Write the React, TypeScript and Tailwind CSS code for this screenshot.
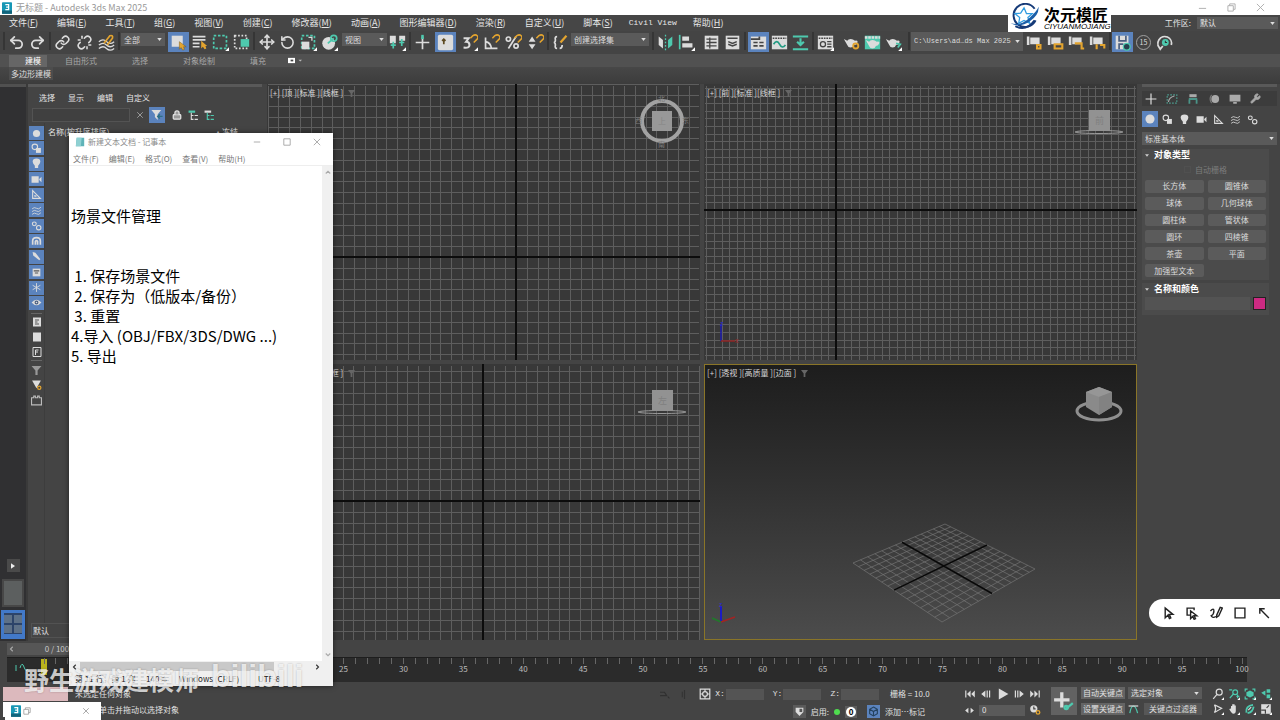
import React, { useState } from 'react';
import { Link, Lock, Move, Redo2, RotateCcw, Undo2, Unlink, Wrench, X } from 'lucide-react';

const TEAL = '#4ec9ae';
const GOLD = '#e3a42f';
const LIGHT = '#dcdcdc';

type IconProps = { children: React.ReactNode; className?: string };

const Icon: React.FC<IconProps> = ({ children, className = 'size-[17px]' }) => (
  <svg viewBox="0 0 20 20" className={`shrink-0 ${className}`} fill="none" stroke={LIGHT} strokeWidth="2">
    {children}
  </svg>
);

// little triangle in the corner of flyout buttons
const Fly = () => <path d="M20 15.500v4.500h-4.500z" fill="#fff" stroke="none" />;
const Magnet = () => <path d="M11 5l3-3q3-2 5 0t0 4l-4 4" stroke={GOLD} strokeWidth="1.800" />;
const Gear = () => <circle cx="15" cy="14" r="3" stroke={GOLD} strokeWidth="2.200" />;
const Teapot = () => (
  <path d="M1 6l4 2q1-2 4-2t5 2q4-1 3 2t-4 3q-1 3-4 3t-4-3z" fill={LIGHT} stroke="none" />
);

const icons = {
  bind: (
    <Icon>
      <path d="M1 9q5-4 9 0t9 0M1 13q5-4 9 0t9 0M1 17q5-4 9 0t9 0" strokeWidth="1.500" />
      <path d="M7 11l7-9q4-1 3 3l-6 8" stroke={GOLD} />
    </Icon>
  ),
  select: (
    <Icon>
      <path d="M2 2h13v13H2z" fill={LIGHT} stroke="none" />
      <path d="M11 9v9l2-2 2 3 2-1-1-3h3z" fill={GOLD} stroke="#6b5014" strokeWidth="0.500" />
    </Icon>
  ),
  byName: (
    <Icon>
      <path d="M2 3h15M2 7h15M2 11h8M2 15h8" />
      <path d="M12 8v9l2-2 2 3 2-1-1-3h2z" fill={GOLD} stroke="none" />
    </Icon>
  ),
  rect: (
    <Icon>
      <path d="M2 2h15v15H2z" stroke={TEAL} strokeDasharray="3 2" />
      <Fly />
    </Icon>
  ),
  crossing: (
    <Icon>
      <path d="M2 2h14v15H2z" strokeDasharray="2 2" />
      <path d="M9 6h10v9H9z" fill={TEAL} stroke="none" />
    </Icon>
  ),
  scale: (
    <Icon>
      <path d="M2 2h15v15H2z" stroke={TEAL} strokeDasharray="3 2" />
      <path d="M2 9h9v9H2z" fill={LIGHT} stroke="none" />
      <path d="M10 4h4v4" strokeWidth="1.500" />
      <Fly />
    </Icon>
  ),
  place: (
    <Icon>
      <circle cx="9" cy="11" r="7.500" fill={LIGHT} stroke="none" />
      <circle cx="15" cy="5" r="3.500" stroke={TEAL} strokeWidth="2" />
      <path d="M8 11l7-6" stroke={TEAL} strokeWidth="2" />
      <Fly />
    </Icon>
  ),
  pivot: (
    <Icon>
      <path d="M1 2h7v9H1zM12 2h7v6h-7z" fill={LIGHT} stroke="none" />
      <path d="M5 9v8M2 13h6M15 6v8M12 10h6" stroke={TEAL} />
      <Fly />
    </Icon>
  ),
  manipulate: (
    <Icon>
      <path d="M10 3v15M2 10h16" />
      <path d="M10 1v5" stroke={TEAL} strokeWidth="3" />
    </Icon>
  ),
  keyboard: (
    <Icon>
      <rect x="1" y="1" width="18" height="18" rx="2" fill={LIGHT} stroke="none" />
      <path d="M8 12V6M6 8l2-2 2 2" stroke="#5d4a22" />
    </Icon>
  ),
  snap: (
    <Icon>
      <path d="M3 5h6l-3 4q4 0 4 4t-7 3" strokeWidth="2.400" />
      <Magnet />
      <Fly />
    </Icon>
  ),
  angle: (
    <Icon>
      <path d="M3 4v13h14M3 9q6 1 7 8" />
      <Magnet />
    </Icon>
  ),
  percent: (
    <Icon>
      <circle cx="4" cy="6" r="2.500" />
      <circle cx="13" cy="14" r="2.500" />
      <path d="M13 3L4 17" />
      <Magnet />
    </Icon>
  ),
  spinner: (
    <Icon>
      <path d="M2 9l4-6 4 6zM2 12h8l-4 6z" fill={LIGHT} stroke="none" />
      <Magnet />
    </Icon>
  ),
  braces: (
    <Icon>
      <path d="M6 3q-3 0-2 4 0 3-2 3 2 0 2 3-1 4 2 4M9 17q3 0 3-4" />
      <path d="M10 10l7-8" stroke={GOLD} strokeWidth="2.600" />
    </Icon>
  ),
  mirror: (
    <Icon>
      <path d="M2 3l5 4v10l-5-4z" fill={LIGHT} stroke="none" />
      <path d="M18 3l-5 4v10l5-4z" fill={TEAL} stroke="none" />
      <path d="M10 1v18" strokeDasharray="2 2" stroke={TEAL} strokeWidth="1.500" />
    </Icon>
  ),
  align: (
    <Icon>
      <path d="M2 1v17" stroke={TEAL} />
      <path d="M5 3h8v5H5zM5 11h12v5H5z" fill={LIGHT} stroke="none" />
      <Fly />
    </Icon>
  ),
  layers: (
    <Icon>
      <path d="M2 2h16v16H2z" fill={LIGHT} stroke="none" />
      <path d="M4 6h12M4 10h12M4 14h12M8 4v13" stroke="#444" strokeWidth="1.500" />
    </Icon>
  ),
  stack: (
    <Icon>
      <path d="M2 2h16v16H2z" fill={LIGHT} stroke="none" />
      <path d="M4 5h12M5 9l5 2 5-2M5 12l5 2 5-2" stroke="#444" strokeWidth="1.800" />
    </Icon>
  ),
  ribbon: (
    <Icon>
      <path d="M1 3h18v15H1z" fill={LIGHT} stroke="none" />
      <path d="M1 6h10V3M4 10h5M11 10h5M4 14h5M11 14h5" stroke="#444" />
    </Icon>
  ),
  curve: (
    <Icon>
      <path d="M1 2h18v16H1z" fill={LIGHT} stroke="none" />
      <path d="M2 5h16" stroke="#444" strokeDasharray="2 1" />
      <path d="M3 12q4-6 7 0t7 1" stroke="#249b83" />
    </Icon>
  ),
  schematic: (
    <Icon>
      <path d="M1 3h18M1 18h18" stroke={TEAL} strokeWidth="2.500" />
      <path d="M10 5v8M6 9l4 4 4-4" stroke={TEAL} strokeWidth="2.500" />
    </Icon>
  ),
  material: (
    <Icon>
      <path d="M1 2h18v16H1z" fill={LIGHT} stroke="none" />
      <path d="M2 5h16" stroke="#444" strokeDasharray="2 1" />
      <circle cx="7" cy="12" r="3" stroke="#444" strokeWidth="1.500" />
      <path d="M12 9h5M12 12h5M12 15h5" stroke="#444" strokeWidth="1.500" />
      <Fly />
    </Icon>
  ),
  renderSetup: (
    <Icon>
      <Teapot />
      <Gear />
    </Icon>
  ),
  frameWindow: (
    <Icon>
      <path d="M1 2h18v16H1z" fill={TEAL} stroke="none" />
      <path d="M1 4h18" stroke={LIGHT} strokeWidth="3" strokeDasharray="3 1" />
      <g transform="translate(1 1)">
        <Teapot />
      </g>
    </Icon>
  ),
  render: (
    <Icon>
      <Teapot />
      <path d="M13 11l5 1-3 4" stroke={TEAL} />
      <Fly />
    </Icon>
  ),
  autosave: (
    <Icon>
      <path d="M2 2h15v16H2z" fill={LIGHT} stroke="none" />
      <path d="M6 2v6h8V2M6 18v-6h5" stroke="#4a5f80" />
      <circle cx="15" cy="15" r="4" fill="#27414f" stroke={TEAL} strokeWidth="1.500" />
    </Icon>
  ),
  history: (
    <Icon>
      <path d="M5 17A8 8 0 1 1 18 13M2 13l3 5 3-4" />
      <circle cx="11" cy="10" r="4" fill={TEAL} stroke="none" />
      <path d="M11 8v2h2" stroke="#333" strokeWidth="1.200" />
    </Icon>
  ),
};

const ProjectIcon: React.FC<{ badge: string }> = ({ badge }) => (
  <Icon>
    <path d="M1 3h3v10H1zM5 4h11v8H5z" fill={LIGHT} stroke="none" />
    <path d={badge} stroke={GOLD} strokeWidth="2.500" />
  </Icon>
);

const Tool: React.FC<{ label: string; active?: boolean; children: React.ReactNode }> = ({ label, active, children }) => (
  <button
    aria-label={label}
    className={`flex h-[20px] w-[21px] shrink-0 items-center justify-center text-[#dcdcdc] ${active ? 'bg-[#5b83bd]' : ''}`}
  >
    {children}
  </button>
);

const Sep = () => <span className="mx-px h-[18px] w-[2px] shrink-0 bg-[#353535]" />;

type PickProps = { label: string; value: string; className?: string };

const Pick: React.FC<PickProps> = ({ label, value, className = '' }) => (
  <div className={`flex shrink-0 items-center bg-[#5a5a5a] px-[3px] ${className}`}>
    <select aria-label={label} className="min-w-0 flex-1 appearance-none bg-transparent outline-none">
      <option>{value}</option>
    </select>
    <svg viewBox="0 0 6 4" className="h-[3px] w-[5px] shrink-0">
      <path d="M0 0h6L3 4z" fill="#ddd" />
    </svg>
  </div>
);

const AppBadge = () => (
  <svg viewBox="0 0 12 14" className="h-[12px] w-[10px] shrink-0">
    <rect width="12" height="14" rx="1" fill="#1797b5" />
    <rect y="10" width="12" height="4" fill="#12647c" />
    <path d="M4 3h4v6H4M5 6h3" stroke="#fff" strokeWidth="1.500" fill="none" />
  </svg>
);

const TitleBar = () => (
  <header className="flex h-[15px] shrink-0 items-center gap-[4px] bg-white pl-[2px] pr-[15px] text-[9px] text-[#999]">
    <AppBadge />
    <h1>无标题 - Autodesk 3ds Max 2025</h1>
    <div className="ml-auto flex gap-[20px]">
      {['M1 6h8', 'M1 3h6v6H1zM3 3V1h6v6H7', 'M1 1l8 8M9 1l-8 8'].map((d, i) => (
        <button key={d} aria-label={['最小化', '还原', '关闭'][i]}>
          <svg viewBox="0 0 10 10" className="size-[9px]" fill="none" stroke="#aaa">
            <path d={d} />
          </svg>
        </button>
      ))}
    </div>
  </header>
);

const menus = [
  ['文件', 'F'], ['编辑', 'E'], ['工具', 'T'], ['组', 'G'], ['视图', 'V'], ['创建', 'C'], ['修改器', 'M'],
  ['动画', 'A'], ['图形编辑器', 'D'], ['渲染', 'R'], ['自定义', 'U'], ['脚本', 'S'], ['Civil View', ''], ['帮助', 'H'],
];

const MenuBar = () => (
  <nav className="flex h-[16px] shrink-0 items-center bg-[#464646] pl-[9px] pr-[2px] text-[9px] text-[#e6e6e6]">
    <div className="flex items-center gap-[19px] leading-[12px]">
      {menus.map(([name, key]) =>
        key ? (
          <button key={name} className="shrink-0">
            {name}(<u>{key}</u>)
          </button>
        ) : (
          <button key={name} className="-mx-[3px] shrink-0 font-['Liberation_Mono',monospace] text-[8px]">{name}</button>
        ),
      )}
    </div>
    <label className="ml-auto flex items-center gap-[6px] text-[8px]">
      工作区:
      <Pick label="工作区" value="默认" className="h-[12px] w-[81px]" />
    </label>
  </nav>
);

const Toolbar = () => (
  <div className="flex h-[23px] shrink-0 items-start bg-[#444] pl-[2px] pt-px text-[8px] text-[#dcdcdc]">
    <Sep />
    <Tool label="撤消"><Undo2 size={17} strokeWidth={2.5} /></Tool>
    <Tool label="重做"><Redo2 size={17} strokeWidth={2.5} /></Tool>
    <Sep />
    <div className="flex gap-px">
      <Tool label="链接"><Link size={15} strokeWidth={2.5} /></Tool>
      <Tool label="取消链接"><Unlink size={15} strokeWidth={2.5} /></Tool>
      <Tool label="绑定">{icons.bind}</Tool>
    </div>
    <Sep />
    <Pick label="选择过滤器" value="全部" className="mr-[3px] mt-px h-[13px] w-[44px]" />
    <Tool label="选择对象" active>{icons.select}</Tool>
    <Tool label="按名称选择">{icons.byName}</Tool>
    <Tool label="矩形选择区域">{icons.rect}</Tool>
    <Tool label="窗口/交叉">{icons.crossing}</Tool>
    <Sep />
    <Tool label="移动"><Move size={16} strokeWidth={2.5} /></Tool>
    <Tool label="旋转"><RotateCcw size={15} strokeWidth={2.5} /></Tool>
    <Tool label="缩放">{icons.scale}</Tool>
    <Tool label="放置">{icons.place}</Tool>
    <Pick label="参考坐标系" value="视图" className="ml-[2px] mt-px h-[13px] w-[45px]" />
    <Tool label="使用轴点中心">{icons.pivot}</Tool>
    <Sep />
    <Tool label="选择并操纵">{icons.manipulate}</Tool>
    <div className="ml-[2px] flex">
      <Tool label="键盘快捷键覆盖" active>{icons.keyboard}</Tool>
    </div>
    <div className="ml-[3px] flex gap-px">
      <Tool label="捕捉开关">{icons.snap}</Tool>
      <Tool label="角度捕捉">{icons.angle}</Tool>
      <Tool label="百分比捕捉">{icons.percent}</Tool>
      <Tool label="微调器捕捉">{icons.spinner}</Tool>
    </div>
    <Sep />
    <Tool label="编辑命名选择集">{icons.braces}</Tool>
    <Pick label="命名选择集" value="创建选择集" className="mr-[2px] mt-px h-[13px] w-[78px]" />
    <Sep />
    <Tool label="镜像">{icons.mirror}</Tool>
    <Tool label="对齐">{icons.align}</Tool>
    <div className="ml-[4px] flex">
      <Tool label="层资源管理器">{icons.layers}</Tool>
      <Tool label="场景资源管理器">{icons.stack}</Tool>
    </div>
    <Sep />
    <div className="ml-px flex">
      <Tool label="功能区" active>{icons.ribbon}</Tool>
      <Tool label="曲线编辑器">{icons.curve}</Tool>
      <Tool label="图解视图">{icons.schematic}</Tool>
    </div>
    <Sep />
    <Tool label="材质编辑器">{icons.material}</Tool>
    <div className="ml-[5px] mr-[3px] flex">
      <Tool label="渲染设置">{icons.renderSetup}</Tool>
      <Tool label="渲染帧窗口">{icons.frameWindow}</Tool>
      <Tool label="渲染">{icons.render}</Tool>
    </div>
    <Sep />
    <Pick
      label="项目路径"
      value="C:\Users\ad…ds Max 2025"
      className="mr-px h-[19px] w-[112px] font-['Liberation_Mono',monospace] text-[7px]"
    />
    <Tool label="项目设置"><ProjectIcon badge="M13 13h4v4h-4z" /></Tool>
    <Tool label="打开项目"><ProjectIcon badge="M9 12h9v5H9z" /></Tool>
    <Tool label="项目结构"><ProjectIcon badge="M8 11h8v6h3" /></Tool>
    <Tool label="项目路径配置"><ProjectIcon badge="M9 12v6M13 13h5v4" /></Tool>
    <Sep />
    <Tool label="自动备份" active>{icons.autosave}</Tool>
    <Tool label="备份间隔">
      <span className="flex size-[15px] items-center justify-center rounded-full border border-[#a0a0a0] text-[7px]">15</span>
    </Tool>
    <Tool label="备份历史">{icons.history}</Tool>
  </div>
);

const Ribbon = () => (
  <>
    <div className="flex h-[13px] shrink-0 items-center gap-[35px] bg-[#515151] pl-[9px] text-[8px] text-[#a8a8a8]">
      <button className="h-[12px] w-[38px] bg-[#666] pl-[10px] leading-[12px] text-white">建模</button>
      <button className="-ml-[17px]">自由形式</button>
      <button>选择</button>
      <button>对象绘制</button>
      <button>填充</button>
      <button aria-label="最小化功能区" className="-ml-[14px]">
        <svg viewBox="0 0 16 8" className="h-[7px] w-[16px]">
          <path d="M0 1h8v6H0z" fill="#fff" />
          <path d="M3 3h3v2H3z" fill="#444" />
          <path d="M12 3h4l-2 2z" fill="#bbb" />
        </svg>
      </button>
    </div>
    <div className="flex h-[17px] shrink-0 items-start bg-gradient-to-b from-[#474747] to-[#3c3c3c] pl-[9px] text-[8px] text-[#ddd]">
      <button className="h-[13px] bg-[#4d4d4d] px-[2px]">多边形建模</button>
    </div>
  </>
);

const LayoutStrip = () => (
  <aside className="flex w-[26px] shrink-0 flex-col items-center bg-[#303032] pb-[2px]">
    <span className="h-[3px] w-full bg-[#505050]" />
    <button aria-label="展开" className="mt-auto flex h-[13px] w-[13px] items-center justify-center bg-[#4a4a4a]">
      <svg viewBox="0 0 6 8" className="h-[6px] w-[4px]"><path d="M0 0l6 4-6 4z" fill="#eee" /></svg>
    </button>
    <button aria-label="单视口" className="mt-[7px] h-[28px] w-[22px] border-2 border-[#474747] bg-[#5c5f5f]" />
    <button
      aria-label="四视口"
      className="mt-[3px] grid h-[29px] w-[24px] grid-cols-2 content-center gap-[2px] border-[3px] border-b-[5px] border-[#4279c8] bg-[#2d4469]"
    >
      {[0, 1, 2, 3].map((n) => <span key={n} className="h-[8px] bg-[#5e7187]" />)}
    </button>
  </aside>
);

const filters: [string, React.ReactNode][] = [
  ['几何体', <circle key="a" cx="10" cy="10" r="6.500" fill={LIGHT} stroke="none" />],
  ['图形', <g key="a"><circle cx="7" cy="7" r="5" /><path d="M9 9h9v9H9z" fill={LIGHT} stroke="none" /></g>],
  ['灯光', <path key="a" d="M10 1q7 0 7 6 0 3-4 7v4H7v-4Q3 10 3 7q0-6 7-6z" fill={LIGHT} stroke="none" />],
  ['摄影机', <path key="a" d="M1 4h13v12H1zM15 9l4-4v10l-4-4z" fill={LIGHT} stroke="none" />],
  ['辅助对象', <path key="a" d="M3 3v14h14zM7 11v2h3" />],
  ['空间扭曲', <path key="a" d="M2 7q4-4 8-1t8-2M2 12q4-4 8-1t8-2M2 17q4-4 8-1t8-2" strokeWidth="1.500" />],
  ['组', <g key="a" strokeWidth="2"><circle cx="6" cy="7" r="3.500" /><circle cx="14" cy="14" r="4" /></g>],
  ['外部参照', <path key="a" d="M3 16V9q0-6 7-6t7 6v7M8 16v-6q2-3 4 0v6" strokeWidth="3" />],
  ['骨骼', <path key="a" d="M3 2l5 1 9 12-2 2L4 8z" fill={LIGHT} stroke="none" />],
  ['容器', <g key="a"><path d="M3 3h14v14H3z" fill={LIGHT} stroke="none" /><path d="M5 7h10M7 11h6" stroke="#555" /></g>],
  ['冻结', <path key="a" d="M10 2v16M3 6l14 8M17 6L3 14" strokeWidth="1.600" />],
  ['隐藏', <g key="a"><path d="M1 10q9-10 18 0-9 10-18 0z" fill={LIGHT} stroke="none" /><circle cx="10" cy="10" r="2.500" stroke="#4a5f80" /></g>],
];

const Explorer = () => (
  <section className="flex w-[240px] shrink-0 flex-col border-l-2 border-[#3a3a3a] bg-[#444] text-[8px] text-[#e4e4e4]">
    <span className="mr-[4px] h-[3px] bg-[#595959]" />
    <div className="mt-[4px] flex h-[14px] items-center gap-[13px] pl-[11px]">
      {['选择', '显示', '编辑', '自定义'].map((m) => <button key={m}>{m}</button>)}
    </div>
    <div className="mt-[2px] flex h-[16px] items-center pl-[4px]">
      <input aria-label="查找" className="h-[14px] w-[98px] border border-[#535353] bg-[#404040] px-1" />
      <button aria-label="清除" className="ml-[5px]"><X size={10} color="#aaa" /></button>
      <button aria-label="过滤" className="ml-[4px] flex size-[16px] items-center justify-center bg-[#5b83bd]">
        <Icon className="size-[14px]">
          <path d="M2 3h14l-5 6v8l-4-4V9z" fill={LIGHT} stroke="none" />
          <path d="M12 12h6M14 9l-3 3 3 3" stroke="#2d6f86" />
        </Icon>
      </button>
      <button aria-label="锁定" className="ml-[7px]"><Lock size={10} strokeWidth={3} fill="#999" /></button>
      <button aria-label="展开全部" className="ml-[6px]">
        <Icon className="size-[11px]"><path d="M1 3h12" stroke={TEAL} strokeWidth="4" /><path d="M6 5v12h4M6 10h4M12 10h6M12 17h6" /></Icon>
      </button>
      <button aria-label="折叠全部" className="ml-[5px]">
        <Icon className="size-[11px]"><path d="M1 3h12" strokeWidth="4" /><path d="M6 5v12h4M6 10h4M12 10h6M12 17h6" stroke={TEAL} /></Icon>
      </button>
    </div>
    <div className="flex flex-1 pl-px">
      <div className="mt-[3px] flex w-[15px] flex-col items-center">
        <div className="flex h-[184px] flex-col justify-between">
          {filters.map(([label, art]) => (
            <button key={label} aria-label={label} className="flex h-[14px] w-[15px] items-center justify-center bg-[#5b83bd]">
              <Icon className="size-[11px]">{art}</Icon>
            </button>
          ))}
        </div>
        <span className="mt-[3px] h-px w-[11px] bg-[#666]" />
        <div className="mt-[3px] flex flex-col gap-[5px]">
          <button aria-label="全选"><Icon className="size-[10px]"><path d="M2 1h16v18H2z" fill={LIGHT} stroke="none" /><path d="M6 6h8M6 10h5M6 14h8" stroke="#555" /></Icon></button>
          <button aria-label="取消选择"><Icon className="size-[10px]"><path d="M2 1h16v18H2z" fill={LIGHT} stroke="none" /></Icon></button>
          <button aria-label="反选"><Icon className="size-[10px]"><path d="M2 1h16v18H2zM7 16V6h6M7 10h5" /></Icon></button>
        </div>
        <span className="mt-[3px] h-px w-[11px] bg-[#666]" />
        <div className="mt-[4px] flex flex-col gap-[4px]">
          <button aria-label="过滤器"><Icon className="size-[11px]"><path d="M1 2h18l-7 8v8H8v-8z" fill="#999" stroke="none" /></Icon></button>
          <button aria-label="高级过滤器"><Icon className="size-[11px]"><path d="M2 1h16l-8 14z" fill={LIGHT} stroke="none" /><Gear /></Icon></button>
          <button aria-label="收藏"><Icon className="size-[11px]"><path d="M1 5h4V2h3v3h4V2h3v3h4v13H1z" stroke="#bbb" /></Icon></button>
        </div>
      </div>
      <div className="flex flex-1 flex-col border-l border-[#3d3d3d]">
        <div className="flex h-[18px] items-center pl-[3px]">
          <span>名称(按升序排序)</span>
          <span className="ml-auto pr-[28px]">▴ 冻结</span>
        </div>
      </div>
    </div>
    <div className="mb-[3px] ml-[3px] flex h-[15px] items-center border border-[#525252] pl-px">
      <button>默认</button>
    </div>
  </section>
);

type Pt = [number, number];

const Grid: React.FC<{ axis: Pt; step: number }> = ({ axis: [ax, ay], step }) => {
  const marks = (origin: number, end: number) => {
    const out: number[] = [];
    for (let v = origin % step; v < end; v += step) out.push(Math.round(v));
    return out;
  };
  return (
    <g shapeRendering="crispEdges">
      <path
        d={marks(ax, 433).map((x) => `M${x} 1V276`).join('') + marks(ay, 276).map((y) => `M0 ${y}H431`).join('')}
        stroke="#5e5e5e"
        transform="translate(0.500 0.500)"
      />
      <path d={`M${ax} 0V276M0 ${ay}H433`} stroke="#0c0c0c" strokeWidth="2" />
    </g>
  );
};

// maps the unit square onto the four projected floor corners
const project = (u: number, v: number): Pt => {
  const [p0, p1, p2, p3]: Pt[] = [[241, 160], [331, 205], [238, 258], [149, 199]];
  const dx1 = p1[0] - p2[0], dx2 = p3[0] - p2[0], sx = p0[0] - p1[0] + p2[0] - p3[0];
  const dy1 = p1[1] - p2[1], dy2 = p3[1] - p2[1], sy = p0[1] - p1[1] + p2[1] - p3[1];
  const det = dx1 * dy2 - dx2 * dy1;
  const g = (sx * dy2 - dx2 * sy) / det;
  const h = (dx1 * sy - sx * dy1) / det;
  const w = g * u + h * v + 1;
  return [
    ((p1[0] - p0[0] + g * p1[0]) * u + (p3[0] - p0[0] + h * p3[0]) * v + p0[0]) / w,
    ((p1[1] - p0[1] + g * p1[1]) * u + (p3[1] - p0[1] + h * p3[1]) * v + p0[1]) / w,
  ];
};

const seg = (a: Pt, b: Pt) => `M${a[0]} ${a[1]}L${b[0]} ${b[1]}`;

const Floor = () => {
  const lines = Array.from({ length: 15 }, (_, i) => i / 14);
  return (
    <g>
      <path d={lines.map((t) => seg(project(t, 0), project(t, 1)) + seg(project(0, t), project(1, t))).join('')} stroke="#747474" strokeWidth="0.700" />
      <path d={seg(project(0.5, 0), project(0.5, 1)) + seg(project(0, 0.5), project(1, 0.5))} stroke="#080808" strokeWidth="1.500" />
    </g>
  );
};

const SideCube: React.FC<{ x: number; y: number; face: string }> = ({ x, y, face }) => (
  <g transform={`translate(${x} ${y})`}>
    <ellipse cx="0" cy="12" rx="24" ry="1.500" fill="none" stroke="#9a9a9a" />
    <rect x="-10" y="-10" width="21" height="21" fill="#929292" />
    <text x="-4" y="4" fontSize="9" fill="#808080">{face}</text>
  </g>
);

const Viewport: React.FC<{ view: string; shading: string; style: string; active?: boolean; children: React.ReactNode }> = ({
  view, shading, style, active, children,
}) => (
  <div
    className={`relative min-h-0 min-w-0 overflow-hidden ${active ? 'bg-gradient-to-b from-[#1d1d1d] to-[#4c4c4c]' : 'bg-[#383838]'}`}
  >
    <svg viewBox="0 0 433 276" preserveAspectRatio="xMidYMid slice" className="block size-full" fill="none">
      {children}
    </svg>
    <div className={`absolute inset-0 flex items-start gap-[5px] border pl-[2px] pt-[2px] text-[8px] leading-[12px] text-[#d8d8d8] ${active ? 'border-[#8a7528]' : 'border-transparent'}`}>
      <span className="whitespace-pre">[+] [{view} ][{shading} ][{style} ]</span>
      <svg viewBox="0 0 8 8" className="mt-[3px] size-[7px]"><path d="M0 0h8L5 4v4H3V4z" fill="#666" /></svg>
    </div>
  </div>
);

const Viewports = () => (
  <main className="grid min-w-0 flex-1 grid-cols-2 grid-rows-2 gap-[4px] bg-[#444] pb-px pl-px">
    <Viewport view="顶" shading="标准" style="线框">
      <Grid axis={[249, 173]} step={10.8} />
      <circle cx="395" cy="37" r="20" stroke="#a2a2a2" strokeWidth="4" />
      <rect x="385" y="27" width="20" height="20" fill="#989898" />
      <text x="391" y="40" fontSize="8" fill="#868686">上</text>
      <text x="391" y="17" fontSize="7" fill="#7c7c7c">北</text>
      <text x="391" y="63" fontSize="7" fill="#7c7c7c">南</text>
      <text x="368" y="39" fontSize="7" fill="#7c7c7c">西</text>
      <text x="415" y="39" fontSize="7" fill="#7c7c7c">东</text>
    </Viewport>
    <Viewport view="前" shading="标准" style="线框">
      <Grid axis={[132, 126]} step={7.63} />
      <SideCube x={395} y={36} face="前" />
      <path d="M17 257V240" stroke="#1b1bb0" strokeWidth="1.500" />
      <path d="M17 257H31" stroke="#8f2323" strokeWidth="1.500" />
      <text x="16" y="242" fontSize="7" fill="#2a2ad0">z</text>
      <text x="31" y="259" fontSize="7" fill="#a32323">x</text>
    </Viewport>
    <Viewport view="左" shading="标准" style="线框">
      <Grid axis={[216, 137]} step={10.8} />
      <SideCube x={395} y={36} face="左" />
    </Viewport>
    <Viewport view="透视" shading="高质量" style="边面" active>
      <Floor />
      <ellipse cx="395" cy="47" rx="22" ry="9" stroke="#8f8f8f" strokeWidth="3" />
      <path d="M395 23l13 5v15l-13 8-13-8V28z" fill="#8a8a8a" />
      <path d="M395 23l13 5-13 5-13-5z" fill="#969696" />
      <path d="M395 33v18l13-8V28z" fill="#828282" />
      <path d="M17 258V242" stroke="#1b1bc4" strokeWidth="2" />
      <path d="M17 258l14-5" stroke="#a32323" strokeWidth="1.500" />
      <path d="M17 258l-9-4" stroke="#1f7a2a" strokeWidth="1.500" />
      <text x="15" y="243" fontSize="7" fill="#2a2ad0">z</text>
    </Viewport>
  </main>
);

const panelTabs: [string, React.ReactNode][] = [
  ['创建', <path key="a" d="M10 1v18M1 10h18" />],
  ['修改', <g key="a" stroke="#4a9488"><path d="M2 3h16v14H2z" strokeDasharray="3 2" /><path d="M4 15q1-8 10-10" stroke="#aaa" /></g>],
  ['层次', <g key="a"><path d="M4 2h12v5H4z" fill="#aaa" stroke="none" /><path d="M4 11v7M16 11v7M3 10h14" stroke="#4a9488" strokeWidth="3" /></g>],
  ['运动', <g key="a"><circle cx="12" cy="10" r="6.500" fill="#aaa" stroke="none" /><path d="M6 3q-5 7 0 14" stroke="#777" /></g>],
  ['显示', <path key="a" d="M1 3h18v11H1zM7 15h6v3H7z" fill="#aaa" stroke="none" />],
];

const primitives = ['长方体', '圆锥体', '球体', '几何球体', '圆柱体', '管状体', '圆环', '四棱锥', '茶壶', '平面', '加强型文本'];

const Rollout: React.FC<{ title: string; children: React.ReactNode }> = ({ title, children }) => (
  <section className="mr-[8px] bg-[#4b4b4b] px-[3px] pb-[3px]">
    <h2 className="flex h-[12px] items-center gap-[5px] text-[9px] font-bold text-white">
      <svg viewBox="0 0 6 4" className="h-[3px] w-[4px]"><path d="M0 0h6L3 4z" fill="#ccc" /></svg>
      {title}
    </h2>
    {children}
  </section>
);

const CommandPanel = () => (
  <aside className="flex w-[143px] shrink-0 flex-col bg-[#444] pl-[5px] pr-[3px] text-[8px] text-[#dcdcdc]">
    <span className="h-[3px] bg-[#595959]" />
    <div className="mt-[4px] flex h-[15px] items-center gap-[9px] bg-[#3c3c3c] pl-[3px]">
      {panelTabs.map(([label, art]) => (
        <button key={label} aria-label={label}><Icon className="size-[12px]">{art}</Icon></button>
      ))}
      <button aria-label="实用程序"><Wrench size={11} color="#aaa" fill="#aaa" /></button>
    </div>
    <div className="mt-[5px] flex h-[16px] items-center gap-px">
      {filters.slice(0, 7).map(([label, art], i) => (
        <button key={label} aria-label={label} className={`flex size-[16px] items-center justify-center ${i === 0 ? 'bg-[#5b83bd]' : ''}`}>
          <Icon className={i === 0 ? 'size-[14px]' : 'size-[11px]'}>{art}</Icon>
        </button>
      ))}
    </div>
    <Pick label="类别" value="标准基本体" className="mt-[5px] h-[13px]" />
    <div className="mt-[4px] flex flex-col gap-[3px]">
      <Rollout title="对象类型">
        <label className="flex h-[17px] items-center justify-center gap-[4px] text-[#7c7c7c]">
          <input type="checkbox" disabled className="size-[7px] appearance-none border border-[#505050]" />
          自动栅格
        </label>
        <div className="mt-[2px] grid h-[97px] grid-cols-2 gap-[4px]">
          {primitives.map((p) => (
            <button key={p} className="min-h-0 rounded-xs bg-[#5b5b5b] leading-[12px]">{p}</button>
          ))}
        </div>
      </Rollout>
      <Rollout title="名称和颜色">
        <div className="flex h-[17px] items-center gap-[3px]">
          <input aria-label="名称" className="h-[13px] min-w-0 flex-1 bg-[#535353] px-1" />
          <button aria-label="颜色" className="size-[13px] border border-[#222] bg-[#cc2a82]" />
        </div>
      </Rollout>
    </div>
  </aside>
);

const TimeSlider = () => (
  <div className="flex h-[16px] shrink-0 items-center bg-[#444] pl-[7px] text-[8px] text-[#ccc]">
    <button aria-label="上一帧" className="flex h-[12px] w-[10px] items-center justify-center bg-[#555]">
      <Chevron d="M5 1L2 4l3 3" />
    </button>
    <button className="h-[12px] w-[80px] bg-[#565656] leading-[12px]">0 / 100</button>
  </div>
);

const Ruler = () => (
  <div className="flex h-[25px] shrink-0 bg-[#444] pl-[7px] pr-[33px]">
    <div className="flex flex-1 border-t border-[#1e1e1e] bg-[#2b2b2b] pl-[37px] pr-[5px]">
      <svg className="h-full w-full overflow-visible">
        <rect x="-3" y="1" width="6" height="16" fill="#b9b21c" />
        <path d="M-28 7v6M-24 10q2-7 4-1t4 2" stroke={TEAL} fill="none" />
        {Array.from({ length: 101 }, (_, f) => (
          <line key={f} x1={`${f}%`} x2={`${f}%`} y1="0" y2="6" stroke="#666" shapeRendering="crispEdges" />
        ))}
        {/* frame 0 is under the yellow marker, so it gets no number */}
        {Array.from({ length: 20 }, (_, i) => (
          <text key={i} x={`${(i + 1) * 5}%`} y="14" fontSize="8" fill="#bbb" textAnchor="middle">{(i + 1) * 5}</text>
        ))}
      </svg>
    </div>
  </div>
);

const playback: [string, string][] = [
  ['转至开头', 'M2 4h2v12H2zM11 4v12L5 10zM18 4v12l-6-6z'],
  ['上一帧', 'M9 4v12L2 10zM11 4h2v12h-2zM15 4h2v12h-2z'],
  ['播放', 'M3 1l16 9-16 9z'],
  ['下一帧', 'M3 4h2v12H3zM7 4h2v12H7zM11 4l7 6-7 6z'],
  ['转至结尾', 'M2 4l6 6-6 6zM9 4l6 6-6 6zM16 4h2v12h-2z'],
];

const navIcons: [string, React.ReactNode][] = [
  ['缩放', <g key="a"><circle cx="12" cy="7" r="5" /><path d="M8 11l-6 7" /></g>],
  ['缩放所有', <g key="a" stroke={TEAL}><circle cx="12" cy="7" r="4" /><path d="M9 10l-6 7M2 3h5M14 14h5M16 11v6" /></g>],
  ['最大化显示', <g key="a"><path d="M2 6V2h4M14 2h4v4M18 14v4h-4M6 18H2v-4" stroke={TEAL} /><path d="M10 4l6 3v6l-6 3-6-3V7z" fill={TEAL} stroke="none" /></g>],
  ['所有最大化显示', <g key="a" fill={TEAL} stroke="none"><path d="M2 8l7-4v9zM11 2h6v6h-6zM11 11h6v6h-6z" /></g>],
  ['视野', <path key="a" d="M4 3l12 6L4 16M4 3q4 6 0 13" />],
  ['平移', <path key="a" d="M5 9V5h2v4V2h2v7V2h2v7V4h2v9q0 5-4 5-3 0-7-8z" fill={LIGHT} stroke="none" />],
  ['环绕', <g key="a"><path d="M4 16Q2 5 15 3M6 17q9-2 10-11" stroke={TEAL} strokeWidth="3" /><path d="M7 12l5-5" /></g>],
  ['最大化视口', <g key="a"><path d="M2 2h16v16H2z" fill={LIGHT} stroke="none" /><path d="M2 12h7v6M11 8l4-4" stroke="#444" /></g>],
];

const CoordField: React.FC<{ axis: string }> = ({ axis }) => (
  <label className="flex items-center gap-px font-['Liberation_Mono',monospace]">
    {axis}:
    <input className="h-[11px] w-[38px] bg-[#545454] px-1" />
  </label>
);

const StatusBar = () => {
  const [frame, setFrame] = useState('0');
  return (
    <footer className="flex h-[38px] shrink-0 items-start bg-[#444] pl-[3px] pr-[7px] pt-[5px] text-[8px] text-[#e0e0e0]">
      <div className="flex w-[65px] flex-col gap-px">
        <span className="h-[14px] bg-[#dcb9bd]" />
        <span className="h-[15px] bg-white" />
      </div>
      <div className="ml-[7px] flex flex-col gap-[4px] leading-[12px]">
        <p className="h-[13px] pt-px">未选定任何对象</p>
        <p>单击或单击并拖动以选择对象</p>
      </div>
      <div className="ml-auto flex flex-col gap-[4px]">
        <div className="flex h-[14px] items-center gap-[9px]">
          <Icon className="size-[11px]"><path d="M2 6h8l4 6H2M16 14l3 3" stroke="#303030" /></Icon>
          <Icon className="size-[11px]"><path d="M10 2v16M6 5v10" stroke="#333" /></Icon>
          <div className="flex items-center gap-[4px]">
            <Icon className="size-[12px]"><path d="M2 2h16v16H2z" /><circle cx="10" cy="10" r="4" /><path d="M10 2v4M10 14v4M2 10h4M14 10h4" /></Icon>
            <CoordField axis="X" />
          </div>
          <CoordField axis="Y" />
          <CoordField axis="Z" />
          <span className="ml-[2px] w-[74px]">栅格 = 10.0</span>
        </div>
        <div className="flex h-[13px] items-center gap-[5px] self-end pr-[39px]">
          <button aria-label="自适应降级" className="bg-[#5a5a5a] p-px">
            <Icon className="size-[11px]"><path d="M3 3h14v8l-7 7-7-7z" fill={LIGHT} stroke="none" /><path d="M10 5h5v6h-5z" fill="#555" stroke="none" /></Icon>
          </button>
          <span>启用:</span>
          <span className="size-[6px] rounded-full bg-[#4fdc4f]" />
          <button className="flex h-[12px] w-[12px] items-center justify-center bg-[#5c5c5c]">
            <span className="flex size-[10px] items-center justify-center rounded-full bg-white text-[8px] font-bold text-black">0</span>
          </button>
          <button aria-label="隔离" className="ml-[5px] bg-[#5b83bd] p-px">
            <Icon className="size-[11px]"><path d="M10 2l7 4v8l-7 4-7-4V6zM3 6l7 4 7-4M10 10v8" stroke="#24425f" /></Icon>
          </button>
          <button>添加…标记</button>
        </div>
      </div>
      <div className="flex w-[77px] flex-col gap-[3px]">
        <div className="flex h-[14px] items-center justify-between">
          {playback.map(([label, d]) => (
            <button key={label} aria-label={label}>
              <Icon className="size-[12px]"><path d={d} fill={LIGHT} stroke="none" /></Icon>
            </button>
          ))}
        </div>
        <div className="flex h-[12px] items-center justify-between">
          <button aria-label="关键点模式"><Icon className="size-[11px]"><path d="M8 5v10l-6-5zM12 5v10l6-5z" fill={LIGHT} stroke="none" /></Icon></button>
          <input
            aria-label="当前帧"
            value={frame}
            onChange={(e) => setFrame(e.target.value)}
            className="h-[11px] w-[46px] bg-[#5a5a5a] px-[3px]"
          />
          <button aria-label="时间配置"><Icon className="size-[12px]"><circle cx="8" cy="8" r="6" fill={LIGHT} stroke="none" /><path d="M8 4v4h3" stroke="#444" /><Gear /></Icon></button>
        </div>
      </div>
      <button aria-label="设置关键点" className="ml-[10px] flex h-[28px] w-[26px] items-center justify-center bg-[#626262]">
        <Icon className="size-[22px]"><path d="M8 2v14M1 9h14" strokeWidth="3" /><path d="M12 17l6-5" stroke={TEAL} /><circle cx="12" cy="16" r="1.500" stroke={TEAL} /></Icon>
      </button>
      <div className="ml-[4px] flex w-[44px] flex-col gap-[4px]">
        <button className="h-[12px] bg-[#646464] leading-[12px]">自动关键点</button>
        <button className="h-[12px] bg-[#646464] leading-[12px]">设置关键点</button>
      </div>
      <div className="ml-[3px] flex w-[74px] flex-col gap-[4px]">
        <Pick label="选择集" value="选定对象" className="h-[12px]" />
        <div className="flex h-[12px] gap-[4px]">
          <Icon className="size-[12px]"><path d="M3 17q2-12 6-12t7 12" stroke={TEAL} /><path d="M1 5h16" /></Icon>
          <button className="flex-1 bg-[#575757] leading-[12px]">关键点过滤器</button>
        </div>
      </div>
      <div className="ml-[9px] grid grid-cols-4 gap-x-[2px] gap-y-px">
        {navIcons.map(([label, art]) => (
          <button key={label} aria-label={label} className="flex size-[14px] items-center justify-center">
            <Icon className="size-[12px]">{art}<Fly /></Icon>
          </button>
        ))}
      </div>
    </footer>
  );
};

const NOTE = `

场景文件管理


 1. 保存场景文件
 2. 保存为（低版本/备份）
 3. 重置
4.导入 (OBJ/FBX/3DS/DWG ...)
5. 导出`;

const Chevron: React.FC<{ d: string; color?: string }> = ({ d, color = '#aaa' }) => (
  <svg viewBox="0 0 8 8" className="size-[6px]" fill="none" stroke={color} strokeWidth="1.500"><path d={d} /></svg>
);

const Notepad = () => {
  const [text, setText] = useState(NOTE);
  return (
    <section className="absolute left-[69px] top-[133px] flex h-[553px] w-[264px] flex-col bg-white text-[8px] text-[#777] shadow-[0_0_5px_#0008]">
      <header className="flex h-[18px] shrink-0 items-center gap-[3px] pl-[6px] pr-[12px] text-[#8c8c8c]">
        <svg viewBox="0 0 12 12" className="size-[10px]">
          <path d="M2 1h9v10H1z" fill="#5eb3b8" />
          <path d="M2 1h6L7 11H1z" fill="#8fd0d2" />
        </svg>
        <h2>新建文本文档 - 记事本</h2>
        <div className="ml-auto flex gap-[22px]">
          {['M1 5h8', 'M1 1h8v8H1z', 'M1 1l8 8M9 1l-8 8'].map((d, i) => (
            <button key={d} aria-label={['最小化', '最大化', '关闭'][i]}>
              <svg viewBox="0 0 10 10" className="size-[8px]" fill="none" stroke="#999"><path d={d} /></svg>
            </button>
          ))}
        </div>
      </header>
      <nav className="flex h-[15px] shrink-0 items-center gap-[10px] border-b border-[#eee] pl-[4px] pt-px">
        {['文件(F)', '编辑(E)', '格式(O)', '查看(V)', '帮助(H)'].map((m) => <button key={m}>{m}</button>)}
      </nav>
      <div className="flex min-h-0 flex-1">
        <textarea
          aria-label="文本"
          value={text}
          onChange={(e) => setText(e.target.value)}
          className="min-w-0 flex-1 resize-none overflow-hidden whitespace-pre bg-white pl-[2px] text-[15px] leading-[20px] text-black outline-none"
        />
        <div className="flex w-[11px] flex-col items-center justify-between bg-[#f0f0f0] py-[3px]">
          <Chevron d="M1 6l3-3 3 3" />
          <Chevron d="M1 2l3 3 3-3" />
        </div>
      </div>
      <div className="flex h-[11px] shrink-0 items-center bg-[#f0f0f0] pl-[3px] pr-[13px]">
        <Chevron d="M5 1L2 4l3 3" color="#333" />
        <span className="ml-[2px] h-[9px] w-[194px] bg-[#c9c9c9]" />
        <span className="ml-auto"><Chevron d="M3 1l3 3-3 3" color="#333" /></span>
      </div>
      <footer className="flex h-[14px] shrink-0 items-center bg-[#f0f0f0] pl-[6px] text-[#222]">
        <span className="w-[71px]">第 11 行，第 1 列</span>
        <span className="w-[33px]">140%</span>
        <span className="w-[79px]">Windows (CRLF)</span>
        <span>UTF-8</span>
      </footer>
    </section>
  );
};

const StudioLogo = () => (
  <div className="absolute right-[169px] top-0 flex h-[32px] w-[103px] items-center gap-[3px] bg-white pl-px text-black">
    <svg viewBox="0 0 32 28" className="h-[27px] w-[32px] shrink-0" fill="none">
      <path d="M26 6A12 12 0 1 0 27 18" stroke="#153a78" strokeWidth="2" />
      <path d="M15 5l2.500 6 6 0-4.500 4 2 6-6-3-5.500 3 1-6-5-4 6-0.500z" stroke="#2f9be0" strokeWidth="1.300" />
      <path d="M1 21q10 3 19-5T30 4Q31 12 21 19T1 21z" fill="#1b5ea8" />
      <path d="M6 24q11 6 20-6" stroke="#153a78" strokeWidth="2" />
    </svg>
    <div className="flex flex-col pt-[4px]">
      <strong className="text-[16px] font-bold leading-[17px]">次元模匠</strong>
      <em className="font-['Liberation_Sans',sans-serif] text-[8px] leading-[8px]">CIYUANMOJIANG</em>
    </div>
  </div>
);

const drawTools: [string, string][] = [
  ['选择', 'M6 3v14l4-4 2 5 2-1-2-5h5z'],
  ['多选', 'M7 13H3V3h10v3M8 7v11l3-3 2 4 2-1-2-4h4z'],
  ['画笔', 'M2 7q5-5 5 0t-4 7q2 4 7 1M11 13l5-11 3 1-5 11-3 2z'],
  ['矩形', 'M3 3h14v14H3z'],
  ['箭头', 'M17 17L4 4M4 11V4h7'],
];

const DrawBar = () => (
  <div className="absolute right-0 top-[599px] flex h-[28px] items-center gap-[10px] rounded-l-full bg-white pl-[12px] pr-[9px]">
    {drawTools.map(([label, d]) => (
      <button key={label} aria-label={label}>
        <svg viewBox="0 0 20 20" className="size-[14px]" fill="none" stroke="#222" strokeWidth="2"><path d={d} /></svg>
      </button>
    ))}
  </div>
);

const TaskThumb = () => (
  <div className="absolute bottom-0 left-[5px] flex h-[18px] w-[96px] items-center gap-[2px] bg-white pl-[6px] pr-[10px]">
    <AppBadge />
    <svg viewBox="0 0 10 10" className="size-[8px]" fill="none" stroke="#999"><path d="M1 3h6v6H1zM3 3V1h6v6H7" /></svg>
    <button aria-label="关闭" className="ml-auto"><X size={10} color="#999" /></button>
  </div>
);

const Watermark = () => (
  <div className="pointer-events-none absolute left-[24px] top-[655px] flex items-start gap-[12px] font-bold text-white/75 [text-shadow:0_0_2px_#0004]">
    <span className="text-[25px] leading-[48px]">野生游戏建模师</span>
    <span className="font-['Liberation_Sans',sans-serif] text-[32px] leading-[42px]">bilibili</span>
  </div>
);

const App: React.FC = () => (
  <div lang="zh-CN" className="relative flex h-screen min-h-[600px] flex-col overflow-hidden bg-[#444] font-['Noto_Sans_CJK_SC',sans-serif]">
    <TitleBar />
    <MenuBar />
    <Toolbar />
    <Ribbon />
    <div className="flex min-h-0 flex-1">
      <LayoutStrip />
      <Explorer />
      <Viewports />
      <CommandPanel />
    </div>
    <TimeSlider />
    <Ruler />
    <StatusBar />
    {/* windows floating over the editor */}
    <Notepad />
    <StudioLogo />
    <DrawBar />
    <TaskThumb />
    <Watermark />
  </div>
);

export default App;
